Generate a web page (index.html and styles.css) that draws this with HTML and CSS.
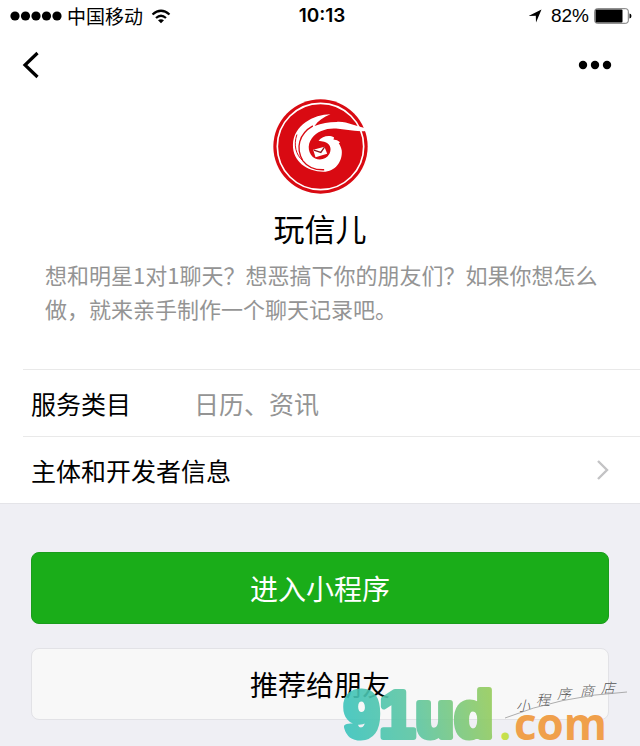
FILE: index.html
```html
<!DOCTYPE html>
<html lang="zh-CN">
<head>
	<meta charset="utf-8">
	<meta name="viewport" content="width=device-width, initial-scale=1">
	<title>玩信儿</title>
	<link rel="stylesheet" href="styles.css">
</head>
<body>
	<div class="status">
		<div class="status-left">
			<svg class="signal" viewBox="0 0 52 10" width="52" height="10">
				<circle cx="5" cy="5" r="4.6"/><circle cx="15.5" cy="5" r="4.6"/><circle cx="26" cy="5" r="4.6"/><circle cx="36.5" cy="5" r="4.6"/><circle cx="47" cy="5" r="4.6"/>
			</svg>
			<span>中国移动</span>
			<svg class="wifi" viewBox="0 0 20 15" width="20" height="15">
				<path d="M1.500 5.500Q10-2 18.500 5.500M5 9Q10 4.500 15 9" fill="none" stroke="#000" stroke-width="2.200"/>
				<path d="M7 11.300Q10 9 13 11.300L10 14.300z"/>
			</svg>
		</div>
		<div class="time">10:13</div>
		<div class="status-right">
			<svg class="arrow" viewBox="0 0 14 14" width="14" height="14">
				<path d="M13.500.500 8 13.500 7.800 6.800.500 7z"/>
			</svg>
			<span>82%</span>
			<svg class="battery" viewBox="0 0 38 16" width="38" height="16">
				<rect x=".7" y=".7" width="33.600" height="14.600" rx="2.500" fill="#fff" stroke="#777"/>
				<rect x="1.500" y="1.500" width="27" height="13" rx="1"/>
				<path d="M35.500 5.500q2 .3 2 2.500t-2 2.500z"/>
			</svg>
		</div>
	</div>

	<nav class="nav">
		<button class="icon-btn" type="button" aria-label="返回">
			<svg viewBox="0 0 18 28" width="18" height="28">
				<path d="M15.500 2 3 14l12.500 12" fill="none" stroke="#000" stroke-width="3.200"/>
			</svg>
		</button>
		<button class="icon-btn" type="button" aria-label="更多">
			<svg viewBox="0 0 34 10" width="34" height="10">
				<circle cx="5" cy="5" r="4.200"/><circle cx="17" cy="5" r="4.200"/><circle cx="29" cy="5" r="4.200"/>
			</svg>
		</button>
	</nav>

	<header class="profile">
		<svg class="logo" viewBox="38 27 286 286" width="95" height="95">
			<circle cx="181" cy="170" r="142" fill="#d90a12"/>
			<circle cx="181" cy="170" r="130" fill="none" stroke="#fff" stroke-width="5"/>
			<!-- tail, curl and head -->
			<path d="M211 73C160 74 100 105 98 165C97 215 140 246 190 246C225 246 248 215 245 182C243 172 240 166 236 160L240 157Q232 149 220 149L222 143C206 134 186 140 175 153L192 156C209 160 216 176 208 192C200 208 180 213 165 206C144 195 139 166 155 145C170 124 200 114 228 116C258 119 286 126 319 123L319 115C287 110 260 93 229 96C205 97 185 99 163 108C174 92 190 82 211 73Z" fill="#fff"/>
			<path d="M158 108C116 132 105 175 128 213C143 233 165 241 192 240" fill="none" stroke="#d90a12" stroke-width="4"/>
			<path d="M128 213C107 196 99 165 110 134M122 229C135 244 160 254 190 252" fill="none" stroke="#d90a12" stroke-width="3"/>
			<!-- envelope -->
			<path d="M159 180 193 171 201 192 166 202Z" fill="#fff"/>
			<path d="M161 181 182 188 193 172" fill="none" stroke="#8d1a20" stroke-width="4"/>
		</svg>
		<h1 class="name">玩信儿</h1>
		<p class="desc">想和明星1对1聊天？想恶搞下你的朋友们？如果你想怎么做，就来亲手制作一个聊天记录吧。</p>
	</header>

	<div class="list">
		<div class="row">
			<span class="label">服务类目</span>
			<span class="value">日历、资讯</span>
		</div>
		<a class="row" href="#">
			<span>主体和开发者信息</span>
			<svg class="more" viewBox="0 0 14 20" width="14" height="20">
				<path d="M2 1l9 9-9 9" fill="none" stroke="#c3c3c5" stroke-width="2.400"/>
			</svg>
		</a>
	</div>

	<div class="actions">
		<button class="btn btn-primary" type="button">进入小程序</button>
		<button class="btn" type="button">推荐给朋友</button>
	</div>

	<svg class="watermark" viewBox="0 0 300 76" width="300" height="76">
		<defs>
			<linearGradient id="mark" gradientUnits="userSpaceOnUse" x1="3" y1="60" x2="153" y2="30">
				<stop offset="0" stop-color="#3bc4be"/>
				<stop offset=".5" stop-color="#60c7a0"/>
				<stop offset="1" stop-color="#96cc5c"/>
			</linearGradient>
		</defs>
		<text class="mark-name" x="4" y="66" fill="url(#mark)" stroke="url(#mark)">91ud</text>
		<text class="mark-com" y="69"><tspan x="159" fill="#c5e04c">.</tspan><tspan x="174" fill="#f0a04b">com</tspan></text>
		<text class="mark-shop" x="176 196 217 240 261" y="40 34 28 25 22">小程序商店</text>
		<path d="M165 47Q220 25 287 21" fill="none" stroke="#999" stroke-width=".8"/>
	</svg>
</body>
</html>
```

FILE: styles.css
```css
* {
	box-sizing: border-box;
}
body {
	margin: 0;
	position: relative;
	min-height: 100vh;
	background-color: #efeff4;
	color: #000;
	font-family: "Noto Sans CJK SC", sans-serif;
}
button {
	font-family: inherit;
	cursor: pointer;
}
svg {
	display: block;
	flex: none;
}

.status {
	display: grid;
	grid-template-columns: 1fr auto 1fr;
	align-items: center;
	height: 32px;
	padding: 0 10px;
	background-color: #fff;
	font-size: 19px;
	line-height: 24px;
}
.status-left,
.status-right {
	display: flex;
	align-items: center;
	gap: 5px;
}
.wifi {
	margin-left: 3px;
}
.status-right {
	justify-content: flex-end;
	margin-right: -2px;
	font-family: "Liberation Sans", sans-serif;
}
.arrow {
	margin-right: 4px;
}
.time {
	padding-left: 4px;
	font-family: Inter, sans-serif;
	font-weight: 600;
}

.nav {
	display: flex;
	justify-content: space-between;
	align-items: center;
	height: 66px;
	padding: 0 28px 0 22px;
	background-color: #fff;
}
.icon-btn {
	padding: 0;
	border: 0;
	background: none;
}

.profile {
	display: flex;
	flex-direction: column;
	align-items: center;
	padding: 1px 0 44px;
	background-color: #fff;
}
.name {
	margin: 14px 0 9px;
	font-size: 31px;
	font-weight: 400;
	line-height: 40px;
}
.desc {
	margin: 0;
	padding: 0 40px 0 45px;
	color: #949494;
	font-size: 22px;
	line-height: 34px;
}

.list {
	padding-left: 23px;
	background-color: #fff;
	border-bottom: 1px solid #e4e4e8;
}
.row {
	display: flex;
	align-items: center;
	height: 67px;
	padding: 0 30px 0 8px;
	border-top: 1px solid #e9e9e9;
	color: #000;
	font-size: 25px;
	text-decoration: none;
}
.label {
	width: 163px;
}
.value {
	color: #949494;
}
.more {
	margin-left: auto;
}

.actions {
	display: flex;
	flex-direction: column;
	gap: 24px;
	padding: 48px 31px 27px;
}
.btn {
	height: 72px;
	border: 1px solid #e2e2e6;
	border-radius: 8px;
	background-color: #f8f8f8;
	color: #000;
	font-size: 28px;
}
.btn-primary {
	border-color: #1a9c1c;
	background-color: #1aad19;
	color: #fff;
}

.watermark {
	position: absolute;
	right: 0;
	bottom: 0;
	pointer-events: none;
}
.mark-name {
	font-family: "Liberation Sans", sans-serif;
	font-size: 64px;
	font-weight: 700;
	stroke-width: 6px;
	stroke-linejoin: round;
	opacity: .9;
}
.mark-com {
	font-family: "Open Sans", sans-serif;
	font-size: 44px;
	font-weight: 700;
}
.mark-shop {
	font-size: 14px;
	font-weight: 300;
	font-style: italic;
	fill: #555;
}
```
